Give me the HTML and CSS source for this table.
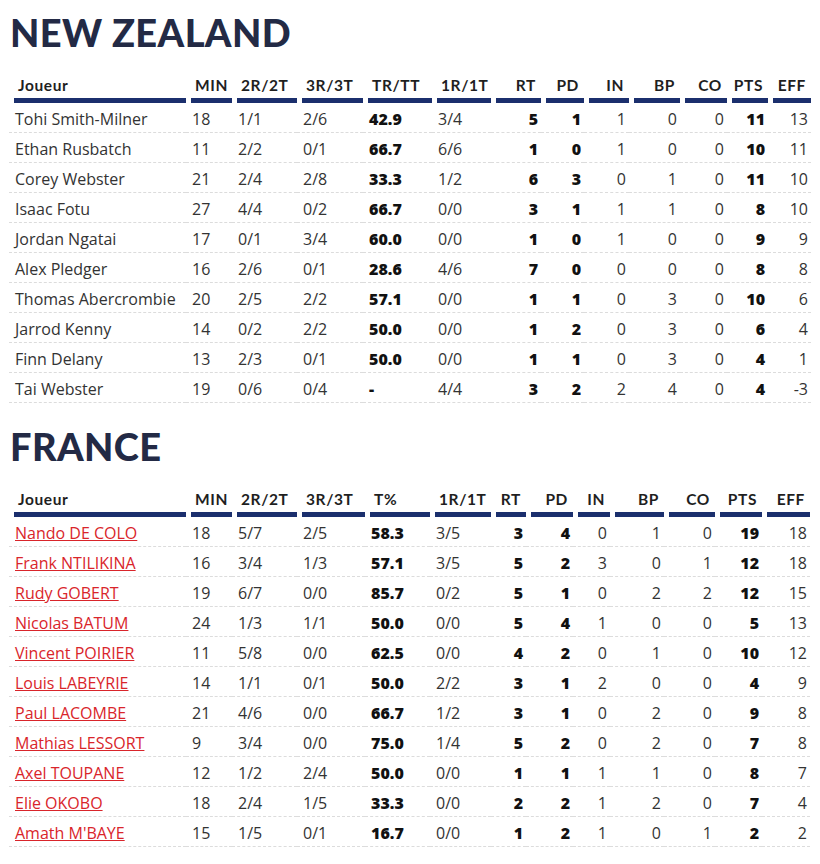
FILE: index.html
```html
<!DOCTYPE html>
<html lang="fr">
<head>
<meta charset="utf-8">
<title>Statistiques</title>
<link rel="stylesheet" href="styles.css">
</head>
<body>
<main class="page">
  <section class="team">
    <h2 class="team-title">NEW ZEALAND</h2>
    <table class="stats stats-nz">
      <colgroup>
        <col><col><col><col><col><col><col><col><col><col><col><col><col>
      </colgroup>
      <thead>
        <tr>
          <th class="l">Joueur</th><th class="l">MIN</th><th class="l">2R/2T</th><th class="l">3R/3T</th><th class="l">TR/TT</th><th class="l">1R/1T</th>
          <th class="r">RT</th><th class="r">PD</th><th class="r">IN</th><th class="r">BP</th><th class="r">CO</th><th class="r">PTS</th><th class="r">EFF</th>
        </tr>
      </thead>
      <tbody>
        <tr><td class="l">Tohi Smith-Milner</td><td class="l">18</td><td class="l">1/1</td><td class="l">2/6</td><td class="l b">42.9</td><td class="l">3/4</td><td class="r b">5</td><td class="r b">1</td><td class="r">1</td><td class="r">0</td><td class="r">0</td><td class="r b">11</td><td class="r">13</td></tr>
        <tr><td class="l">Ethan Rusbatch</td><td class="l">11</td><td class="l">2/2</td><td class="l">0/1</td><td class="l b">66.7</td><td class="l">6/6</td><td class="r b">1</td><td class="r b">0</td><td class="r">1</td><td class="r">0</td><td class="r">0</td><td class="r b">10</td><td class="r">11</td></tr>
        <tr><td class="l">Corey Webster</td><td class="l">21</td><td class="l">2/4</td><td class="l">2/8</td><td class="l b">33.3</td><td class="l">1/2</td><td class="r b">6</td><td class="r b">3</td><td class="r">0</td><td class="r">1</td><td class="r">0</td><td class="r b">11</td><td class="r">10</td></tr>
        <tr><td class="l">Isaac Fotu</td><td class="l">27</td><td class="l">4/4</td><td class="l">0/2</td><td class="l b">66.7</td><td class="l">0/0</td><td class="r b">3</td><td class="r b">1</td><td class="r">1</td><td class="r">1</td><td class="r">0</td><td class="r b">8</td><td class="r">10</td></tr>
        <tr><td class="l">Jordan Ngatai</td><td class="l">17</td><td class="l">0/1</td><td class="l">3/4</td><td class="l b">60.0</td><td class="l">0/0</td><td class="r b">1</td><td class="r b">0</td><td class="r">1</td><td class="r">0</td><td class="r">0</td><td class="r b">9</td><td class="r">9</td></tr>
        <tr><td class="l">Alex Pledger</td><td class="l">16</td><td class="l">2/6</td><td class="l">0/1</td><td class="l b">28.6</td><td class="l">4/6</td><td class="r b">7</td><td class="r b">0</td><td class="r">0</td><td class="r">0</td><td class="r">0</td><td class="r b">8</td><td class="r">8</td></tr>
        <tr><td class="l">Thomas Abercrombie</td><td class="l">20</td><td class="l">2/5</td><td class="l">2/2</td><td class="l b">57.1</td><td class="l">0/0</td><td class="r b">1</td><td class="r b">1</td><td class="r">0</td><td class="r">3</td><td class="r">0</td><td class="r b">10</td><td class="r">6</td></tr>
        <tr><td class="l">Jarrod Kenny</td><td class="l">14</td><td class="l">0/2</td><td class="l">2/2</td><td class="l b">50.0</td><td class="l">0/0</td><td class="r b">1</td><td class="r b">2</td><td class="r">0</td><td class="r">3</td><td class="r">0</td><td class="r b">6</td><td class="r">4</td></tr>
        <tr><td class="l">Finn Delany</td><td class="l">13</td><td class="l">2/3</td><td class="l">0/1</td><td class="l b">50.0</td><td class="l">0/0</td><td class="r b">1</td><td class="r b">1</td><td class="r">0</td><td class="r">3</td><td class="r">0</td><td class="r b">4</td><td class="r">1</td></tr>
        <tr><td class="l">Tai Webster</td><td class="l">19</td><td class="l">0/6</td><td class="l">0/4</td><td class="l b">-</td><td class="l">4/4</td><td class="r b">3</td><td class="r b">2</td><td class="r">2</td><td class="r">4</td><td class="r">0</td><td class="r b">4</td><td class="r">-3</td></tr>
      </tbody>
    </table>
  </section>

  <section class="team">
    <h2 class="team-title">FRANCE</h2>
    <table class="stats stats-fr">
      <colgroup>
        <col><col><col><col><col><col><col><col><col><col><col><col><col>
      </colgroup>
      <thead>
        <tr>
          <th class="l">Joueur</th><th class="l">MIN</th><th class="l">2R/2T</th><th class="l">3R/3T</th><th class="l">T%</th><th class="l">1R/1T</th>
          <th class="r">RT</th><th class="r">PD</th><th class="r">IN</th><th class="r">BP</th><th class="r">CO</th><th class="r">PTS</th><th class="r">EFF</th>
        </tr>
      </thead>
      <tbody>
        <tr><td class="l"><a class="player" href="#">Nando DE COLO</a></td><td class="l">18</td><td class="l">5/7</td><td class="l">2/5</td><td class="l b">58.3</td><td class="l">3/5</td><td class="r b">3</td><td class="r b">4</td><td class="r">0</td><td class="r">1</td><td class="r">0</td><td class="r b">19</td><td class="r">18</td></tr>
        <tr><td class="l"><a class="player" href="#">Frank NTILIKINA</a></td><td class="l">16</td><td class="l">3/4</td><td class="l">1/3</td><td class="l b">57.1</td><td class="l">3/5</td><td class="r b">5</td><td class="r b">2</td><td class="r">3</td><td class="r">0</td><td class="r">1</td><td class="r b">12</td><td class="r">18</td></tr>
        <tr><td class="l"><a class="player" href="#">Rudy GOBERT</a></td><td class="l">19</td><td class="l">6/7</td><td class="l">0/0</td><td class="l b">85.7</td><td class="l">0/2</td><td class="r b">5</td><td class="r b">1</td><td class="r">0</td><td class="r">2</td><td class="r">2</td><td class="r b">12</td><td class="r">15</td></tr>
        <tr><td class="l"><a class="player" href="#">Nicolas BATUM</a></td><td class="l">24</td><td class="l">1/3</td><td class="l">1/1</td><td class="l b">50.0</td><td class="l">0/0</td><td class="r b">5</td><td class="r b">4</td><td class="r">1</td><td class="r">0</td><td class="r">0</td><td class="r b">5</td><td class="r">13</td></tr>
        <tr><td class="l"><a class="player" href="#">Vincent POIRIER</a></td><td class="l">11</td><td class="l">5/8</td><td class="l">0/0</td><td class="l b">62.5</td><td class="l">0/0</td><td class="r b">4</td><td class="r b">2</td><td class="r">0</td><td class="r">1</td><td class="r">0</td><td class="r b">10</td><td class="r">12</td></tr>
        <tr><td class="l"><a class="player" href="#">Louis LABEYRIE</a></td><td class="l">14</td><td class="l">1/1</td><td class="l">0/1</td><td class="l b">50.0</td><td class="l">2/2</td><td class="r b">3</td><td class="r b">1</td><td class="r">2</td><td class="r">0</td><td class="r">0</td><td class="r b">4</td><td class="r">9</td></tr>
        <tr><td class="l"><a class="player" href="#">Paul LACOMBE</a></td><td class="l">21</td><td class="l">4/6</td><td class="l">0/0</td><td class="l b">66.7</td><td class="l">1/2</td><td class="r b">3</td><td class="r b">1</td><td class="r">0</td><td class="r">2</td><td class="r">0</td><td class="r b">9</td><td class="r">8</td></tr>
        <tr><td class="l"><a class="player" href="#">Mathias LESSORT</a></td><td class="l">9</td><td class="l">3/4</td><td class="l">0/0</td><td class="l b">75.0</td><td class="l">1/4</td><td class="r b">5</td><td class="r b">2</td><td class="r">0</td><td class="r">2</td><td class="r">0</td><td class="r b">7</td><td class="r">8</td></tr>
        <tr><td class="l"><a class="player" href="#">Axel TOUPANE</a></td><td class="l">12</td><td class="l">1/2</td><td class="l">2/4</td><td class="l b">50.0</td><td class="l">0/0</td><td class="r b">1</td><td class="r b">1</td><td class="r">1</td><td class="r">1</td><td class="r">0</td><td class="r b">8</td><td class="r">7</td></tr>
        <tr><td class="l"><a class="player" href="#">Elie OKOBO</a></td><td class="l">18</td><td class="l">2/4</td><td class="l">1/5</td><td class="l b">33.3</td><td class="l">0/0</td><td class="r b">2</td><td class="r b">2</td><td class="r">1</td><td class="r">2</td><td class="r">0</td><td class="r b">7</td><td class="r">4</td></tr>
        <tr><td class="l"><a class="player" href="#">Amath M'BAYE</a></td><td class="l">15</td><td class="l">1/5</td><td class="l">0/1</td><td class="l b">16.7</td><td class="l">0/0</td><td class="r b">1</td><td class="r b">2</td><td class="r">1</td><td class="r">0</td><td class="r">1</td><td class="r b">2</td><td class="r">2</td></tr>
      </tbody>
    </table>
  </section>
</main>
</body>
</html>
```

FILE: styles.css
```css
html, body {
  margin: 0;
  padding: 0;
  background: #fff;
}

body {
  font-family: "Open Sans", "Liberation Sans", sans-serif;
  color: #333;
}

.page {
  padding: 9px 0 0 9px;
}

.team-title {
  margin: 0 0 20px;
  padding-left: 1px;
  font-family: Lato, "Liberation Sans", sans-serif;
  font-weight: 900;
  font-size: 38px;
  line-height: 46px;
  color: #232a45;
  letter-spacing: 0.4px;
}

.team + .team {
  margin-top: 20px;
}

.stats {
  table-layout: fixed;
  border-collapse: separate;
  border-spacing: 0;
}

.stats-nz { width: 802px; }
.stats-fr { width: 801px; }

.stats-nz col:nth-child(1) { width: 177px; }
.stats-nz col:nth-child(2) { width: 46px; }
.stats-nz col:nth-child(3) { width: 65px; }
.stats-nz col:nth-child(4) { width: 66px; }
.stats-nz col:nth-child(5) { width: 69px; }
.stats-nz col:nth-child(6) { width: 59px; }
.stats-nz col:nth-child(7) { width: 50px; }
.stats-nz col:nth-child(8) { width: 43px; }
.stats-nz col:nth-child(9) { width: 45px; }
.stats-nz col:nth-child(10) { width: 51px; }
.stats-nz col:nth-child(11) { width: 47px; }
.stats-nz col:nth-child(12) { width: 41px; }
.stats-nz col:nth-child(13) { width: 43px; }

.stats-fr col:nth-child(1) { width: 177px; }
.stats-fr col:nth-child(2) { width: 46px; }
.stats-fr col:nth-child(3) { width: 65px; }
.stats-fr col:nth-child(4) { width: 68px; }
.stats-fr col:nth-child(5) { width: 65px; }
.stats-fr col:nth-child(6) { width: 61px; }
.stats-fr col:nth-child(7) { width: 35px; }
.stats-fr col:nth-child(8) { width: 47px; }
.stats-fr col:nth-child(9) { width: 37px; }
.stats-fr col:nth-child(10) { width: 54px; }
.stats-fr col:nth-child(11) { width: 51px; }
.stats-fr col:nth-child(12) { width: 47px; }
.stats-fr col:nth-child(13) { width: 48px; }

.stats th {
  font-family: Lato, "Liberation Sans", sans-serif;
  font-weight: 700;
  font-size: 15.5px;
  letter-spacing: 0.6px;
  line-height: 20px;
  color: #1f1f1f;
  padding: 0 0 8px;
  white-space: nowrap;
  background-image: linear-gradient(#1b2f6d, #1b2f6d);
  background-repeat: no-repeat;
  background-position: right 0 bottom 0;
  background-size: calc(100% - 5px) 5px;
}

.stats td {
  font-size: 16px;
  line-height: 26px;
  padding: 3px 0 0;
  border-bottom: 1px dashed #dcdcdc;
  white-space: nowrap;
  color: #333;
}

.stats th.l {
  text-align: left;
  padding-left: 9px;
}

.stats td.l {
  text-align: left;
  padding-left: 6px;
}

.stats th.r {
  text-align: right;
  padding-right: 5px;
}

.stats td.r {
  text-align: right;
  padding-right: 3px;
}

.stats td.b {
  font-weight: 800;
  color: #111;
}

.player {
  color: #d9252b;
  text-decoration: underline;
}
```
